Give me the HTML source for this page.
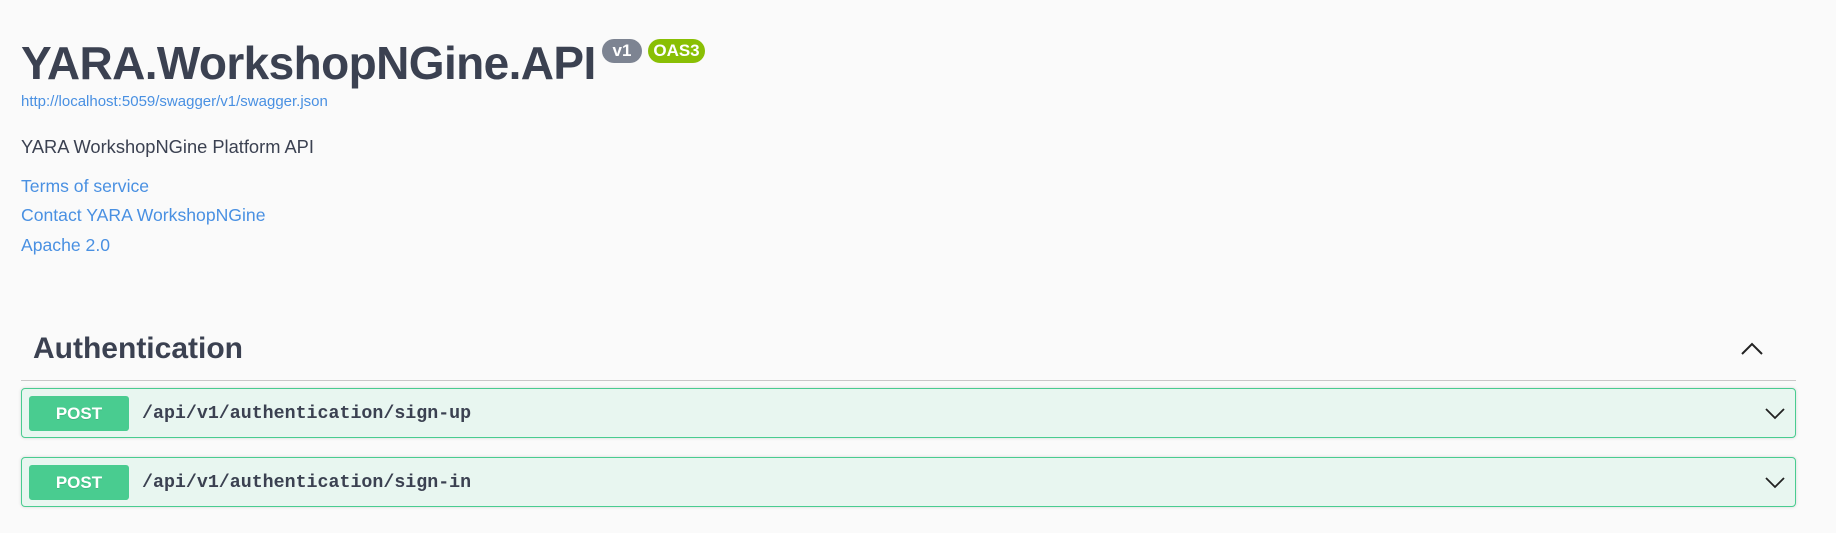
<!DOCTYPE html>
<html><head><meta charset="utf-8"><style>
body{margin:0;background:#fafafa;width:1836px;height:533px;overflow:hidden;font-family:"Liberation Sans",sans-serif;color:#3b4151;position:relative}
.a{position:absolute;white-space:nowrap}
.title{left:21px;top:35px;font-size:46px;font-weight:bold;line-height:56px;letter-spacing:-0.6px}
.badge{position:absolute;top:39px;height:24px;border-radius:12px;color:#fff;font-weight:bold;font-size:17px;line-height:24px;text-align:center}
.link{color:#4990e2;font-size:17.6px}
.op{position:absolute;left:21px;width:1773px;height:48px;border:1px solid #49cc90;border-radius:4px;background:#e8f6f0;box-shadow:0 0 3px rgba(0,0,0,.15)}
.post{position:absolute;left:7px;top:7px;width:100px;height:35px;background:#49cc90;border-radius:3px;color:#fff;font-weight:bold;font-size:17px;line-height:35px;text-align:center;text-shadow:0 1px 0 rgba(0,0,0,.1)}
.path{position:absolute;left:120px;top:1px;line-height:48px;font-family:"Liberation Mono",monospace;font-weight:bold;font-size:18.3px;color:#3b4151}
.chev{position:absolute;right:8px;top:14px}
</style></head><body>
<div class="a title">YARA.WorkshopNGine.API</div>
<div class="badge" style="left:602px;width:40px;background:#7d8492">v1</div>
<div class="badge" style="left:648px;width:57px;background:#89bf04">OAS3</div>
<div class="a link" style="left:21px;top:93px;font-size:15px">http://localhost:5059/swagger/v1/swagger.json</div>
<div class="a" style="left:21px;top:136px;font-size:18.3px">YARA WorkshopNGine Platform API</div>
<div class="a link" style="left:21px;top:176px">Terms of service</div>
<div class="a link" style="left:21px;top:205px">Contact YARA WorkshopNGine</div>
<div class="a link" style="left:21px;top:235px">Apache 2.0</div>
<div class="a" style="left:33px;top:331px;font-size:30px;font-weight:bold;line-height:36px">Authentication</div>
<svg class="a" style="left:1740px;top:341px" width="24" height="16" viewBox="0 0 24 16"><path d="M2 13 L12 3 L22 13" fill="none" stroke="#222" stroke-width="2"/></svg>
<div class="a" style="left:21px;top:380px;width:1775px;height:1px;background:#c8c8c8"></div>
<div class="op" style="top:388px"><div class="post">POST</div><div class="path">/api/v1/authentication/sign-up</div>
<svg class="chev" width="24" height="20" viewBox="0 0 24 20"><path d="M3 6 L12 15 L21 6" fill="none" stroke="#222" stroke-width="1.8"/></svg></div>
<div class="op" style="top:457px"><div class="post">POST</div><div class="path">/api/v1/authentication/sign-in</div>
<svg class="chev" width="24" height="20" viewBox="0 0 24 20"><path d="M3 6 L12 15 L21 6" fill="none" stroke="#222" stroke-width="1.8"/></svg></div>
</body></html>
